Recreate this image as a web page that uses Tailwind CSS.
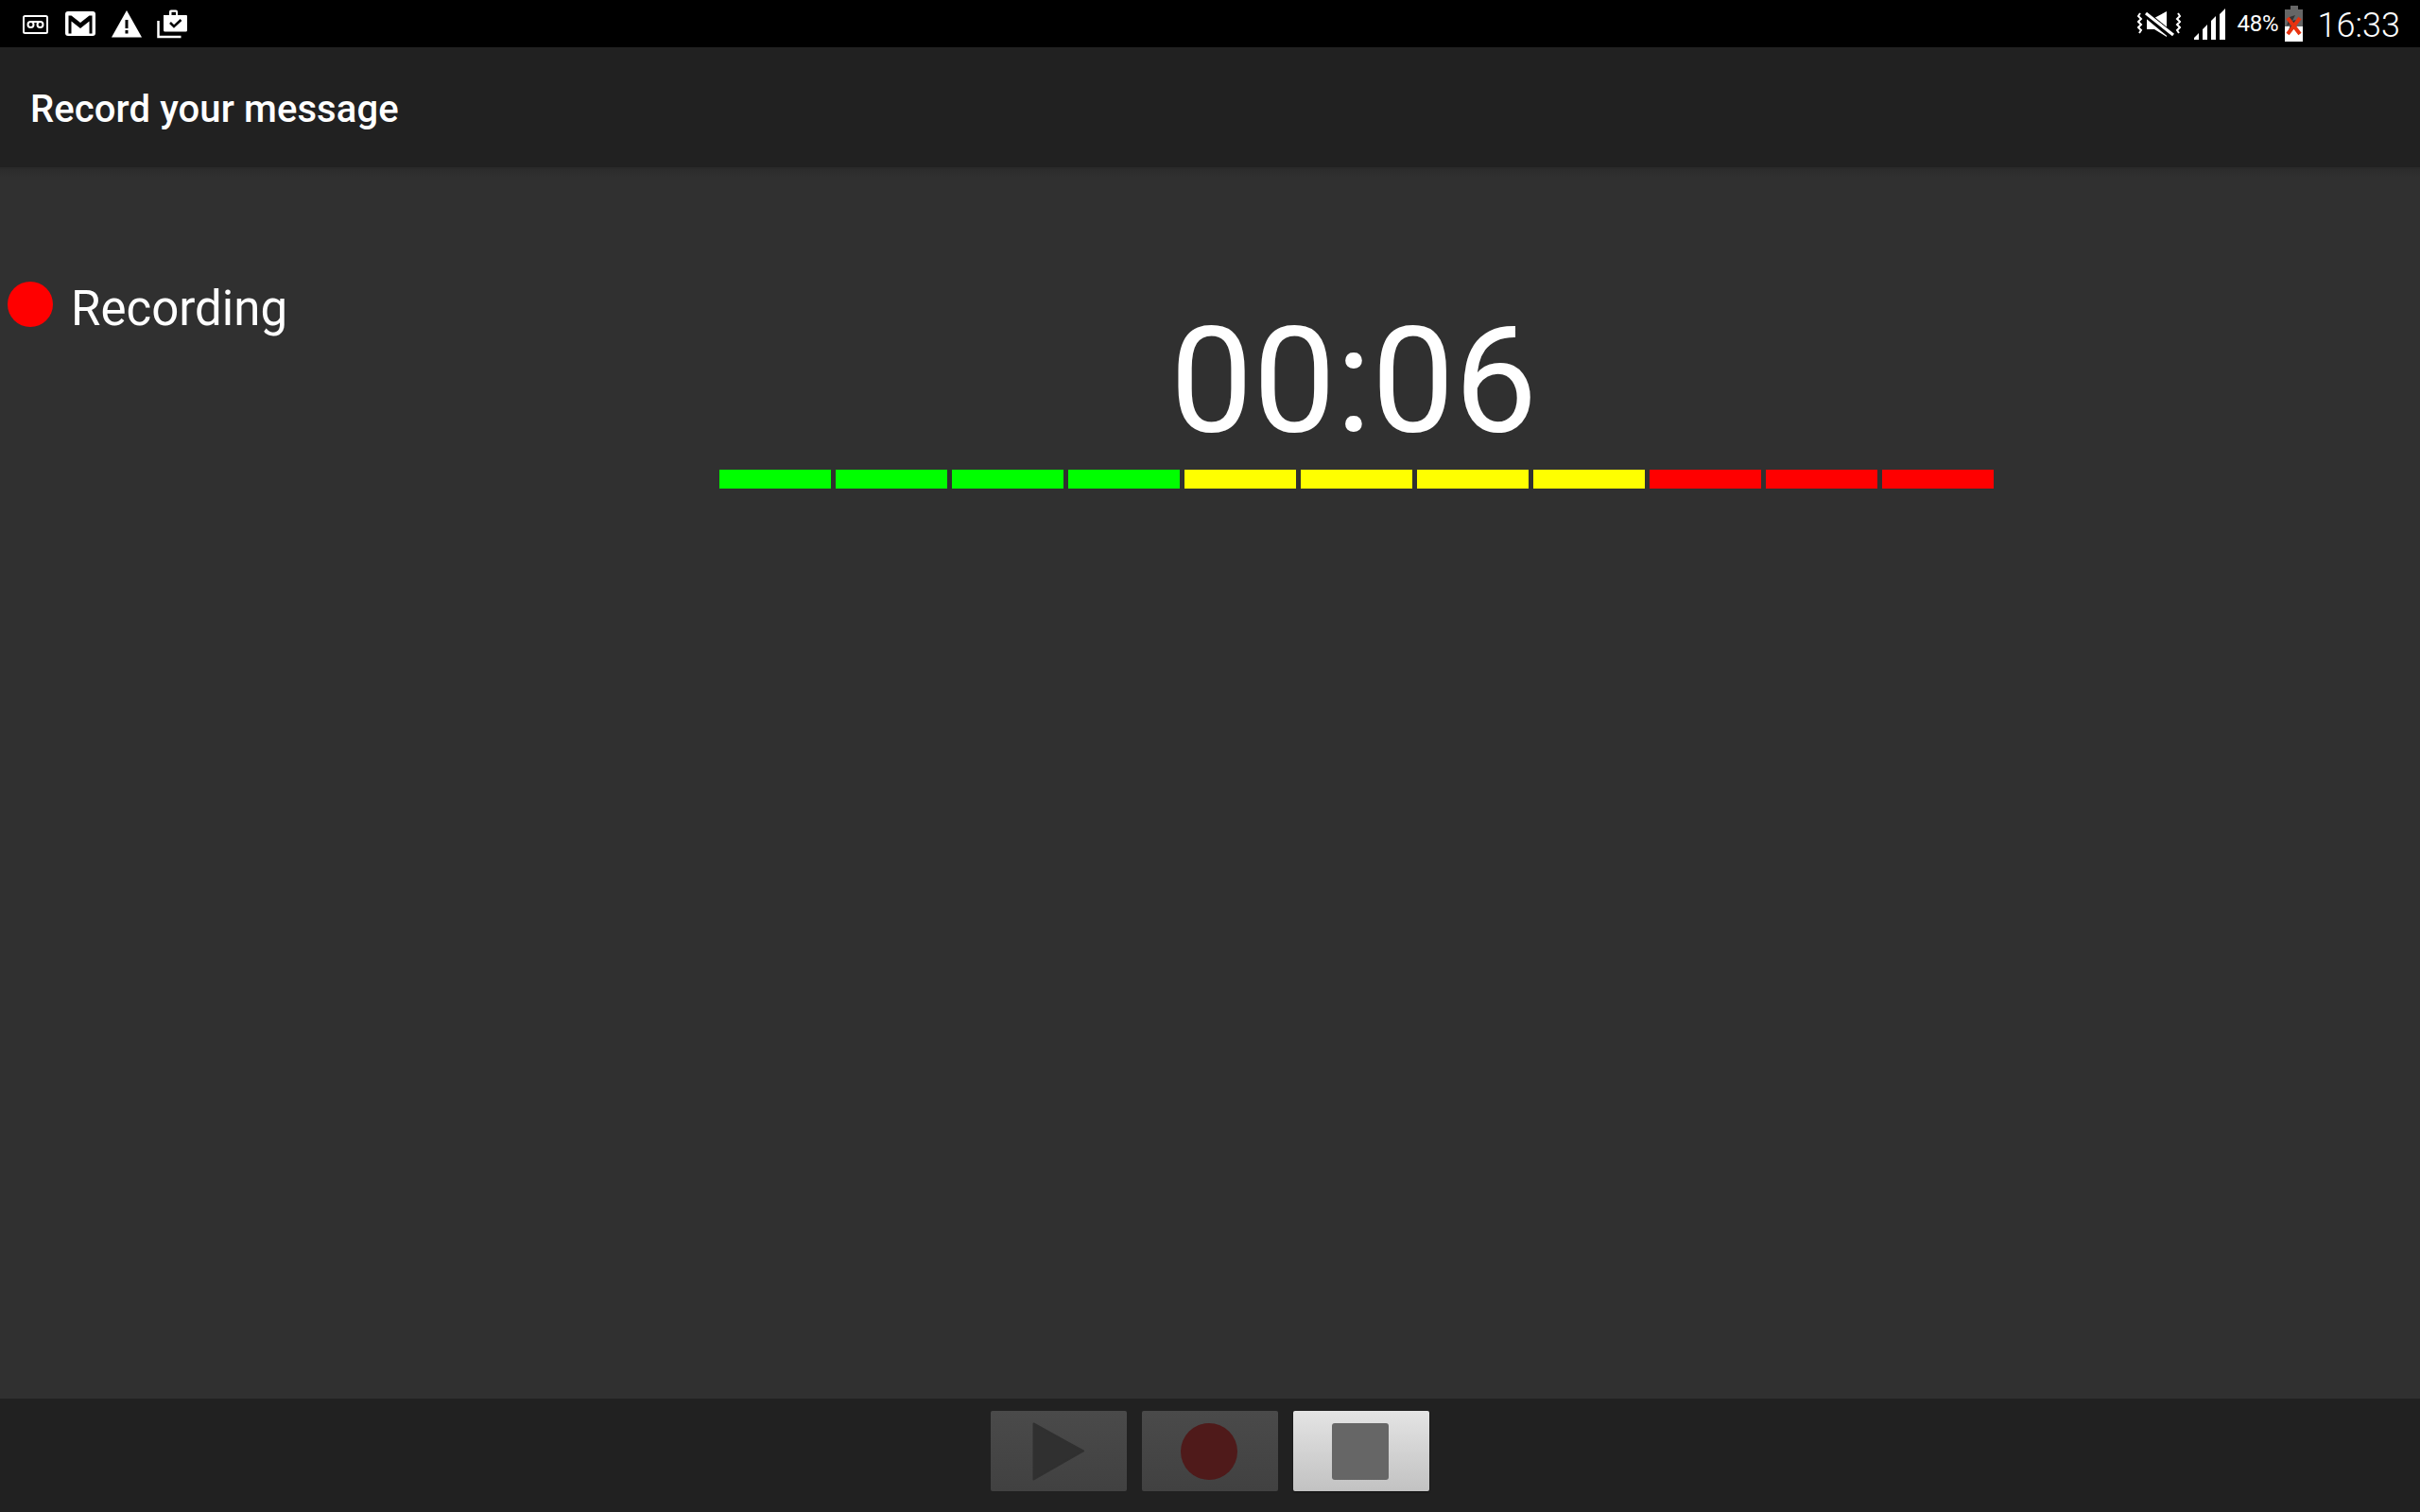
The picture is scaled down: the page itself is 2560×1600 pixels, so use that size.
<!DOCTYPE html>
<html>
<head>
<meta charset="utf-8">
<script src="https://cdn.jsdelivr.net/npm/@tailwindcss/browser@4"></script>
</head>
<body class="bg-[#303030] overflow-hidden">
<div class="w-[2560px] h-[1600px] flex flex-col font-['Roboto',sans-serif] text-white">
  <!-- status bar -->
  <div class="h-[50px] bg-black flex items-center shrink-0 relative">
    <div class="flex items-center pl-[24px] gap-[18px]">
      <svg width="27" height="20" viewBox="0 0 27 20" class="mt-[2px]"><rect x="1" y="1" width="25" height="18" rx="1.5" fill="none" stroke="#fff" stroke-width="2"/><circle cx="8.500" cy="10" r="3" fill="none" stroke="#fff" stroke-width="2"/><circle cx="18.500" cy="10" r="3" fill="none" stroke="#fff" stroke-width="2"/><path d="M8.500 7h10" stroke="#fff" stroke-width="2"/></svg>
      <svg width="32" height="26" viewBox="0 0 32 26" class="ml-[0px]"><rect width="32" height="26" rx="3" fill="#fff"/><path d="M3.500 23.500V4.500h3L16 12l9.500-7.500h3v19h-3V10.500L16 18 6.500 10.500v13z" fill="#000"/></svg>
      <svg width="32" height="30" viewBox="0 0 32 30" class="-ml-[1px]"><path d="M16 1L32 29.500H0z" fill="#fff"/><path d="M14.500 11h3v9h-3zM14.500 22h3v3.500h-3z" fill="#000"/></svg>
      <svg width="33" height="32" viewBox="0 0 33 32" class="-ml-[2px]"><path d="M1.500 13v17h24" fill="none" stroke="#fff" stroke-width="2.500"/><path d="M7 7h6V3.500a2 2 0 0 1 2-2h5a2 2 0 0 1 2 2V7h9a1 1 0 0 1 1 1v15a1.500 1.500 0 0 1-1.500 1.500H8.500A1.500 1.500 0 0 1 7 23z" fill="#fff"/><path d="M15.500 7V3.800h4.500V7z" fill="#000"/><path d="M14 15l4 4 7.500-7" fill="none" stroke="#000" stroke-width="2.500"/></svg>
    </div>
    <div class="ml-auto flex items-center pr-[21px]">
      <svg width="46" height="30" viewBox="0 0 46 30" class="mt-[1px]"><path d="M3 3l-2 3 3 3-3 3 3 3-3 3 3 3-2 3M43 3l2 3-3 3 3 3-3 3 3 3-3 3 2 3" fill="none" stroke="#fff" stroke-width="2"/><path d="M10 8h8L31 1v27l-13-8h-8z" fill="#fff"/><path d="M8 3l30 25" stroke="#000" stroke-width="7"/><path d="M9 3l29 23" stroke="#fff" stroke-width="3.200"/></svg>
      <svg width="33" height="33" viewBox="0 0 33 33" class="ml-[14px]"><path d="M0 33v-2l5-5v7zM9 33V22l5-5v16zM18 33V13l5-5v25zM27 33V6l6-6v33z" fill="#fff"/></svg>
      <span class="ml-[13px] text-[24px] leading-none w-[44px] tracking-[-0.3px]">48%</span>
      <svg width="22" height="38" viewBox="0 0 22 38" class="ml-[5px] -mt-[1px]"><path d="M7 0h8v4h5v34H1V4h6z" fill="#666"/><rect x="1" y="22" width="19" height="16" fill="#fff"/><path d="M6 12l6-2-3 6 4-1-9 14 3-9-4 1z" fill="#333"/><path d="M4 13l13 17M17 13L4 30" stroke="#e8320f" stroke-width="4"/></svg>
      <span class="ml-[14px] text-[36px] font-light leading-none mt-[4px]">16:33</span>
    </div>
  </div>
  <!-- action bar -->
  <div class="h-[129px] bg-[#212121] border-b-2 border-[#2a2a2a] shrink-0 flex items-center pl-[32px]">
    <h1 class="text-[40px] font-medium leading-none mt-[5px] tracking-[0.1px]">Record your message</h1>
  </div>
  <!-- content -->
  <div class="flex-1 flex bg-[#303030] bg-gradient-to-b from-[#2c2c2c] to-[#303030] to-[8px]">
    <div class="w-[761px] shrink-0 flex items-start pt-[119px] pl-[8px]">
      <span class="w-[48px] h-[48px] rounded-full bg-[#ff0000] shrink-0"></span>
      <span class="ml-[19px] mt-[3px] text-[51px] font-normal leading-none">Recording</span>
    </div>
    <div class="w-[1348px] flex flex-col items-center pt-[129px]">
      <div class="text-[156px] font-normal leading-[189px] h-[189px] -ml-[6px]">00:06</div>
      <div class="flex gap-[5px] w-full">
        <div class="w-[118px] h-[20px] bg-[#00ff00]"></div>
        <div class="w-[118px] h-[20px] bg-[#00ff00]"></div>
        <div class="w-[118px] h-[20px] bg-[#00ff00]"></div>
        <div class="w-[118px] h-[20px] bg-[#00ff00]"></div>
        <div class="w-[118px] h-[20px] bg-[#ffff00]"></div>
        <div class="w-[118px] h-[20px] bg-[#ffff00]"></div>
        <div class="w-[118px] h-[20px] bg-[#ffff00]"></div>
        <div class="w-[118px] h-[20px] bg-[#ffff00]"></div>
        <div class="w-[118px] h-[20px] bg-[#ff0000]"></div>
        <div class="w-[118px] h-[20px] bg-[#ff0000]"></div>
        <div class="w-[118px] h-[20px] bg-[#ff0000]"></div>
      </div>
    </div>
  </div>
  <!-- bottom bar -->
  <div class="h-[120px] bg-[#212121] shrink-0 pt-[13px] pl-[1048px] flex gap-[16px] items-start">
    <div class="w-[144px] h-[85px] rounded-[2px] bg-gradient-to-b from-[#4a4a4a] to-[#414141] flex items-center justify-center">
      <svg width="144" height="85" viewBox="0 0 144 85"><path d="M45.500 13.500L98 42.500 45.500 72.500z" fill="#303030" stroke="#303030" stroke-width="2" stroke-linejoin="round"/></svg>
    </div>
    <div class="w-[144px] h-[85px] rounded-[2px] bg-gradient-to-b from-[#4a4a4a] to-[#414141] flex items-center justify-center">
      <div class="w-[60px] h-[60px] rounded-full bg-[#4f1a1a] -ml-[2px]"></div>
    </div>
    <div class="w-[144px] h-[85px] rounded-[2px] bg-gradient-to-b from-[#e4e4e4] to-[#c2c2c2] shadow-[0_1px_2px_rgba(0,0,0,0.5)] flex items-center justify-center">
      <div class="w-[60px] h-[60px] rounded-[3px] bg-[#666666] -ml-[2px]"></div>
    </div>
  </div>
</div>
</body>
</html>
